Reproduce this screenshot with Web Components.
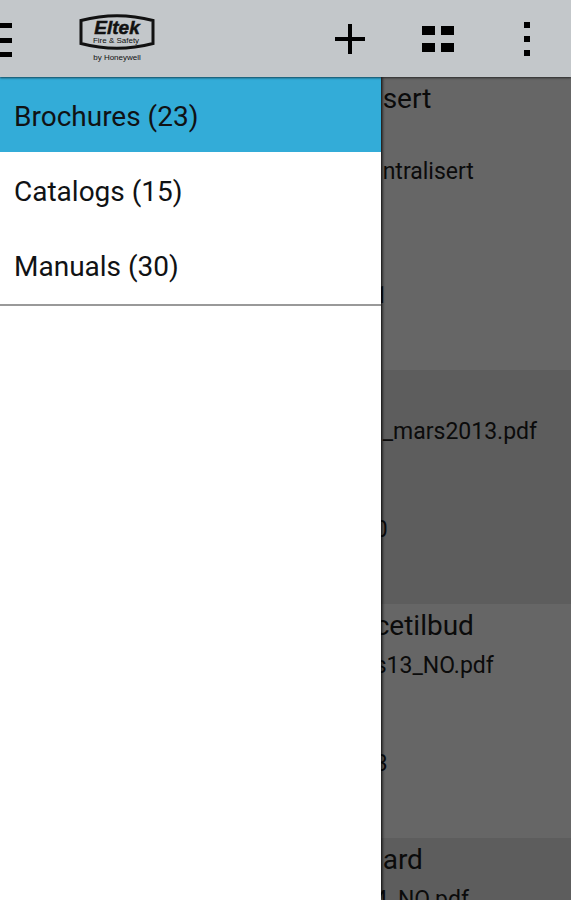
<!DOCTYPE html>
<html lang="en">
<head>
<meta charset="utf-8">
<meta name="viewport" content="width=device-width, initial-scale=1">
<title>Brochures</title>
<style>
  body {
    margin: 0;
    font-family: Roboto, "Liberation Sans", sans-serif;
    color: #101214;
  }
</style>
</head>
<body>
<library-app>
  <action-bar slot="bar"></action-bar>
  <nav-drawer slot="drawer">
    <drawer-item selected>Brochures (23)</drawer-item>
    <drawer-item>Catalogs (15)</drawer-item>
    <drawer-item>Manuals (30)</drawer-item>
  </nav-drawer>
  <document-row tall>
    <span slot="title">sert</span>
    <span slot="file">ntralisert</span>
    <span slot="date" class="cut">1</span>
  </document-row>
  <document-row>
    <span slot="file">_mars2013.pdf</span>
    <span slot="date" class="cut">0</span>
  </document-row>
  <document-row>
    <span slot="title" class="cut">cetilbud</span>
    <span slot="file" class="cut">s13_NO.pdf</span>
    <span slot="date" class="cut">3</span>
  </document-row>
  <document-row>
    <span slot="title">ard</span>
    <span slot="file" class="cut">4_NO.pdf</span>
  </document-row>
</library-app>

<script>
class LibraryApp extends HTMLElement {
  constructor() {
    super();
    this.attachShadow({ mode: 'open' });
    this.shadowRoot.innerHTML = `
      <style>
        :host {
          display: flex;
          flex-direction: column;
          height: 100vh;
          overflow: hidden;
        }
        .panes {
          flex: 1;
          min-height: 0;
          display: grid;
          grid-template-columns: 2fr 1fr;
        }
        main {
          min-width: 0;
          overflow: hidden;
          background: #666;
        }
      </style>
      <slot name="bar"></slot>
      <div class="panes">
        <slot name="drawer"></slot>
        <main><slot></slot></main>
      </div>
    `;
  }
}

class ActionBar extends HTMLElement {
  constructor() {
    super();
    this.attachShadow({ mode: 'open' });
    this.shadowRoot.innerHTML = `
      <style>
        :host {
          display: block;
          position: relative;
          z-index: 2;
          background: #c3c7ca;
          box-shadow: 0 1px 2px rgba(0, 0, 0, 0.6);
        }
        header {
          display: flex;
          align-items: center;
          height: 77px;
        }
        button {
          display: flex;
          align-items: center;
          justify-content: center;
          height: 77px;
          padding: 0;
          border: 0;
          background: none;
          color: #000;
        }
        .action { width: 88px; }
        .logo { margin-left: 67px; }
        .space { flex: 1; }
        svg { display: block; }
      </style>
      <header>
        <button aria-label="Menu">
          <svg width="12" height="36" fill="currentColor"><path d="M0 2h12v5H0zM0 17h12v5H0zM0 31h12v5H0z"/></svg>
        </button>
        <svg class="logo" width="76" height="52" viewBox="0 0 76 52" role="img" aria-label="Eltek">
          <path d="M2 7.500Q38-2 74 7.500V30.500Q38 40 2 30.500Z" fill="none" stroke="#111" stroke-width="3"/>
          <g fill="#111" font-family="Liberation Sans, sans-serif" text-anchor="middle">
            <text x="38" y="21" font-size="19" font-weight="bold" font-style="italic" stroke="#111" stroke-width="0.500">Eltek</text>
            <text x="37" y="30" font-size="8">Fire &amp; Safety</text>
            <text x="38" y="47" font-size="8">by Honeywell</text>
          </g>
        </svg>
        <div class="space"></div>
        <button class="action" aria-label="Add">
          <svg width="32" height="30" fill="currentColor"><path d="M13 0h4v13h13v4H17v13h-4V17H0v-4h13z"/></svg>
        </button>
        <button class="action" aria-label="Grid view">
          <svg width="34" height="26" fill="currentColor"><path d="M0 0h13v9H0zM19 0h13v9H19zM0 17h13v9H0zM19 17h13v9H19z"/></svg>
        </button>
        <button class="action" aria-label="More options">
          <svg width="6" height="36" fill="currentColor"><path d="M0 1h6v6H0zM0 15h6v6H0zM0 29h6v6H0z"/></svg>
        </button>
      </header>
    `;
  }
}

class NavDrawer extends HTMLElement {
  constructor() {
    super();
    this.attachShadow({ mode: 'open' });
    this.shadowRoot.innerHTML = `
      <style>
        :host {
          display: block;
          position: relative;
          z-index: 1;
          background: #fff;
          box-shadow: 1px 0 3px #000;
        }
        nav {
          padding-bottom: 2px;
          border-bottom: 2px solid #999;
        }
      </style>
      <nav><slot></slot></nav>
    `;
  }
}

class DrawerItem extends HTMLElement {
  constructor() {
    super();
    this.attachShadow({ mode: 'open' });
    this.shadowRoot.innerHTML = `
      <style>
        :host { display: block; }
        button {
          display: block;
          width: 100%;
          height: 75px;
          padding: 4px 14px 0;
          border: 0;
          background: none;
          color: inherit;
          font: 28px/32px Roboto, sans-serif;
          text-align: left;
        }
        :host([selected]) button { background: #33acd8; }
      </style>
      <button><slot></slot></button>
    `;
  }
}

class DocumentRow extends HTMLElement {
  constructor() {
    super();
    this.attachShadow({ mode: 'open' });
    this.shadowRoot.innerHTML = `
      <style>
        :host {
          display: block;
          padding: 5px 0 61px 2px;
          color: #0b0b0b;
          white-space: nowrap;
        }
        :host(:nth-of-type(even)) { background: #5d5d5d; }
        h2, p {
          margin: 0;
          font-weight: normal;
        }
        h2 {
          min-height: 33px;
          font-size: 28px;
          line-height: 33px;
        }
        p {
          min-height: 26px;
          font-size: 23px;
          line-height: 26px;
        }
        .file {
          margin: 11px 0 72px;
        }
        :host([tall]) h2 { min-height: 66px; }
        :host([tall]) .file { min-height: 52px; }
        ::slotted(span) { display: block; }
        /* lines that run on underneath the drawer */
        ::slotted(.cut) { margin-left: -8px; }
      </style>
      <h2><slot name="title"></slot></h2>
      <p class="file"><slot name="file"></slot></p>
      <p><slot name="date"></slot></p>
    `;
  }
}

customElements.define('library-app', LibraryApp);
customElements.define('action-bar', ActionBar);
customElements.define('nav-drawer', NavDrawer);
customElements.define('drawer-item', DrawerItem);
customElements.define('document-row', DocumentRow);
</script>
</body>
</html>
